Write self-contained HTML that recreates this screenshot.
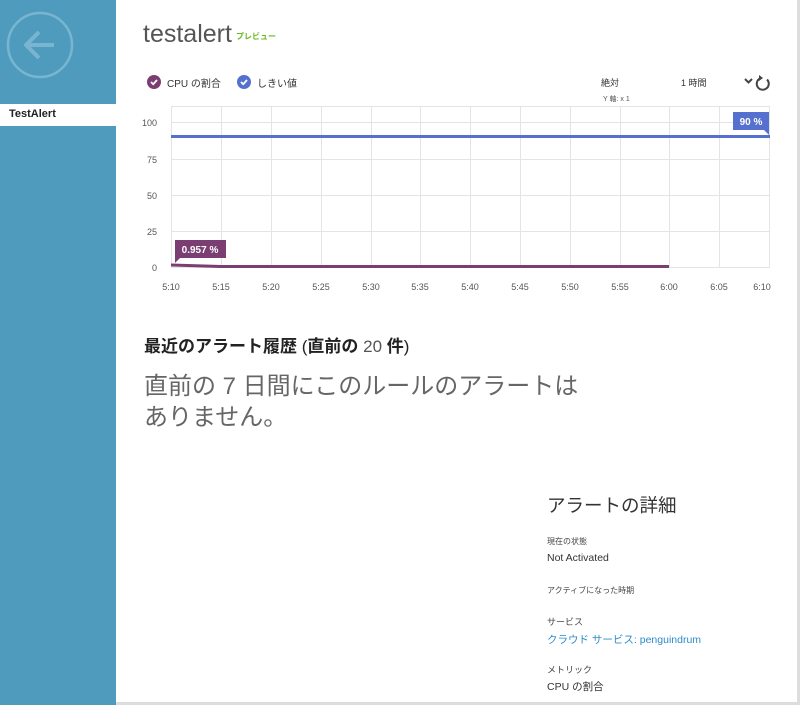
<!DOCTYPE html>
<html><head><meta charset="utf-8"><style>
body{margin:0;width:800px;height:705px;overflow:hidden;background:#fff;font-family:"Liberation Sans","Noto Sans CJK JP",sans-serif;position:relative;color:#333}
.a{position:absolute;white-space:nowrap}
</style></head><body>
<div class="a" style="left:0;top:0;width:116px;height:705px;background:#4f9bbd"></div>
<svg class="a" style="left:6px;top:11px" width="70" height="70" viewBox="0 0 70 70"><circle cx="34" cy="34" r="32" fill="none" stroke="#79b5d0" stroke-width="2.5"/><path d="M21 34H48M33 21L20 34L33 47" fill="none" stroke="#79b5d0" stroke-width="4" stroke-linejoin="round"/></svg>
<div class="a" style="left:0;top:104px;width:116px;height:22px;background:#fff"></div>
<div class="a" style="left:9px;top:108px;font-size:11px;font-weight:bold;color:#222">TestAlert</div>
<div class="a" style="left:797px;top:0;width:3px;height:705px;background:#ddd"></div>
<div class="a" style="left:116px;top:702px;width:684px;height:3px;background:#ddd"></div>
<div class="a" style="left:143px;top:20px;font-size:25px;color:#555">testalert</div>
<div class="a" style="left:236px;top:31px;font-size:8px;color:#6aba1f;font-weight:bold">プレビュー</div>
<svg class="a" style="left:147px;top:75px" width="14" height="14"><circle cx="7" cy="7" r="7" fill="#7a3e72"/><path d="M4 7l2.2 2.2L10 5" stroke="#fff" stroke-width="1.8" fill="none"/></svg>
<div class="a" style="left:167px;top:75px;font-size:10px">CPU の割合</div>
<svg class="a" style="left:237px;top:75px" width="14" height="14"><circle cx="7" cy="7" r="7" fill="#5670cf"/><path d="M4 7l2.2 2.2L10 5" stroke="#fff" stroke-width="1.8" fill="none"/></svg>
<div class="a" style="left:257px;top:75px;font-size:10px">しきい値</div>
<div class="a" style="left:601px;top:76px;font-size:9px">絶対</div>
<div class="a" style="left:603px;top:94px;font-size:7px;color:#555">Y 軸: x 1</div>
<div class="a" style="left:681px;top:76px;font-size:9px">1 時間</div>
<svg class="a" style="left:743px;top:74px" width="30" height="18"><path d="M2 5l3.5 3.5L9 5" stroke="#444" stroke-width="2" fill="none"/><path d="M24 5.5A6 6 0 1 1 18 4" stroke="#444" stroke-width="2" fill="none"/><path d="M16 1l4 3-4 3z" fill="#444"/></svg>
<svg class="a" style="left:0;top:0" width="800" height="300">
<g stroke="#e4e4e4" stroke-width="1">
<line x1="171" y1="106.5" x2="770" y2="106.5"/><line x1="171" y1="122.5" x2="770" y2="122.5"/><line x1="171" y1="159.5" x2="770" y2="159.5"/><line x1="171" y1="195.5" x2="770" y2="195.5"/><line x1="171" y1="231.5" x2="770" y2="231.5"/><line x1="171" y1="267.5" x2="770" y2="267.5"/>
<line x1="171.5" y1="106" x2="171.5" y2="268"/><line x1="221.5" y1="106" x2="221.5" y2="268"/><line x1="271.5" y1="106" x2="271.5" y2="268"/><line x1="321.5" y1="106" x2="321.5" y2="268"/><line x1="371.5" y1="106" x2="371.5" y2="268"/><line x1="420.5" y1="106" x2="420.5" y2="268"/><line x1="470.5" y1="106" x2="470.5" y2="268"/><line x1="520.5" y1="106" x2="520.5" y2="268"/><line x1="570.5" y1="106" x2="570.5" y2="268"/><line x1="620.5" y1="106" x2="620.5" y2="268"/><line x1="669.5" y1="106" x2="669.5" y2="268"/><line x1="719.5" y1="106" x2="719.5" y2="268"/><line x1="769.5" y1="106" x2="769.5" y2="268"/>
</g>
<line x1="171" y1="136.5" x2="770" y2="136.5" stroke="#5670cf" stroke-width="3"/>
<path d="M171 265L221 266.5L669 266.5" stroke="#7a3e72" stroke-width="3" fill="none"/>
<rect x="733" y="112" width="36" height="18" fill="#5670cf"/><path d="M764 130h5v5z" fill="#5670cf"/>
<text x="751" y="125" font-size="10" font-weight="bold" fill="#fff" text-anchor="middle" font-family="Liberation Sans">90 %</text>
<rect x="175" y="240" width="51" height="18" fill="#7a3e72"/><path d="M175 258h5l-5 5z" fill="#7a3e72"/>
<text x="200" y="253" font-size="10" font-weight="bold" fill="#fff" text-anchor="middle" font-family="Liberation Sans">0.957 %</text>
<g font-size="9" fill="#555" font-family="Liberation Sans" text-anchor="end">
<text x="157" y="126">100</text><text x="157" y="163">75</text><text x="157" y="199">50</text><text x="157" y="235">25</text><text x="157" y="271">0</text></g>
<g font-size="9" fill="#555" font-family="Liberation Sans" text-anchor="middle">
<text x="171" y="290">5:10</text><text x="221" y="290">5:15</text><text x="271" y="290">5:20</text><text x="321" y="290">5:25</text><text x="371" y="290">5:30</text><text x="420" y="290">5:35</text><text x="470" y="290">5:40</text><text x="520" y="290">5:45</text><text x="570" y="290">5:50</text><text x="620" y="290">5:55</text><text x="669" y="290">6:00</text><text x="719" y="290">6:05</text><text x="762" y="290">6:10</text></g>
</svg>
<div class="a" style="left:144px;top:332px;font-size:17px;color:#222;font-weight:bold">最近のアラート履歴 <span style="font-weight:normal">(<b>直前の</b> <span style="color:#555">20</span> <b>件</b>)</span></div>
<div class="a" style="left:144px;top:371px;font-size:24px;color:#666;line-height:31px">直前の 7 日間にこのルールのアラートは<br>ありません。</div>
<div class="a" style="left:547px;top:492px;font-size:18.5px;color:#333">アラートの詳細</div>
<div class="a" style="left:547px;top:536px;font-size:8px;color:#444">現在の状態</div>
<div class="a" style="left:547px;top:552px;font-size:10.5px;color:#333">Not Activated</div>
<div class="a" style="left:547px;top:585px;font-size:8px;color:#444">アクティブになった時期</div>
<div class="a" style="left:547px;top:615px;font-size:9px;color:#444">サービス</div>
<div class="a" style="left:547px;top:632px;font-size:10.5px;color:#2b8cc8">クラウド サービス: penguindrum</div>
<div class="a" style="left:547px;top:663px;font-size:9px;color:#444">メトリック</div>
<div class="a" style="left:547px;top:679px;font-size:10.5px;color:#333">CPU の割合</div>
</body></html>
